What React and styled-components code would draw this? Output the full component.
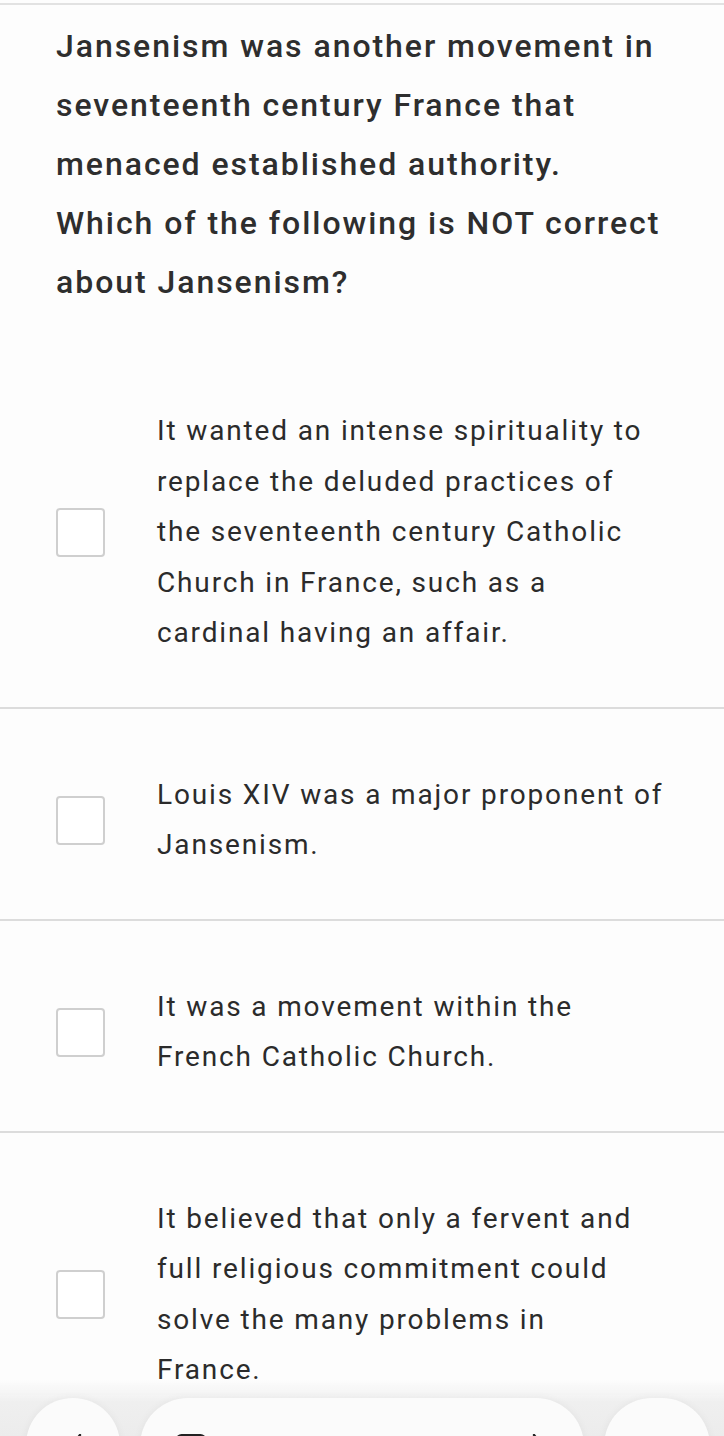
import React from "react";
import styled, { createGlobalStyle } from "styled-components";

const Global = createGlobalStyle`
  html, body { margin: 0; padding: 0; background: #fdfdfd; }
  body { font-family: Roboto, "Noto Sans", sans-serif; color: #2b2b2b; }
`;

const Page = styled.div`
  width: 724px;
  min-height: 1436px;
  border-top: 2px solid #e2e2e2;
  margin-top: 3px;
  background: #fdfdfd;
  position: relative;
`;

const Question = styled.h1`
  margin: 0;
  padding: 12px 0 0 56px;
  max-width: 606px;
  font-size: 32px;
  font-weight: 500;
  line-height: 59px;
  letter-spacing: 1.95px;
  color: #2e2e2e;
`;

const Options = styled.div`
  margin-top: 33px;
  display: flex;
  flex-direction: column;
`;

const Option = styled.label`
  display: flex;
  align-items: center;
  gap: 52px;
  padding: 61px 56px 48px 56px;
  border-bottom: ${(p) => (p.$last ? "none" : "2px solid #dcdcdc")};
  cursor: pointer;
`;

const Box = styled.span`
  flex: 0 0 auto;
  width: 45px;
  height: 45px;
  border: 2px solid #cfcfcf;
  border-radius: 4px;
  background: #fff;
`;

const OptionText = styled.span`
  display: flex;
  flex-direction: column;
  font-size: 28px;
  line-height: 50.5px;
  font-weight: 400;
  color: #2b2b2b;
  letter-spacing: 1.85px;
`;

const Line = styled.span`
  white-space: nowrap;
`;

const NavFade = styled.div`
  position: fixed;
  left: 0;
  right: 0;
  bottom: 0;
  height: 56px;
  background: linear-gradient(to bottom, rgba(240,240,240,0) 0%, #efefef 40%, #ececec 100%);
  pointer-events: none;
`;

const NavRow = styled.div`
  position: fixed;
  left: 0;
  right: 0;
  top: 1398px;
  display: flex;
  align-items: flex-start;
  gap: 20px;
  padding: 0 14px 0 26px;
`;

const Circle = styled.div`
  width: ${(p) => p.$w}px;
  height: 96px;
  border-radius: 48px;
  background: #fbfbfb;
  box-shadow: 0 0 8px rgba(0,0,0,0.05);
  position: relative;
  flex: 0 0 auto;
`;

const Pill = styled(Circle)`
  flex: 1 1 auto;
`;

const Icon = styled.svg`
  position: absolute;
  top: ${(p) => p.$top}px;
  left: ${(p) => p.$left}px;
`;

const options = [
  [
    "It wanted an intense spirituality to",
    "replace the deluded practices of",
    "the seventeenth century Catholic",
    "Church in France, such as a",
    "cardinal having an affair.",
  ],
  ["Louis XIV was a major proponent of", "Jansenism."],
  ["It was a movement within the", "French Catholic Church."],
  [
    "It believed that only a fervent and",
    "full religious commitment could",
    "solve the many problems in",
    "France.",
  ],
];

export default function App() {
  return (
    <>
      <Global />
      <Page>
        <Question>
          Jansenism was another movement in seventeenth century France that
          menaced established authority. Which of the following is NOT correct
          about Jansenism?
        </Question>
        <Options>
          {options.map((lines, i) => (
            <Option key={i} $last={i === options.length - 1}>
              <Box />
              <OptionText>
                {lines.map((l, j) => (
                  <Line key={j}>{l}</Line>
                ))}
              </OptionText>
            </Option>
          ))}
        </Options>
        <NavFade />
        <NavRow>
          <Circle $w={94}>
            <Icon $top={36} $left={44} width="12" height="12" viewBox="0 0 12 12">
              <path d="M10 1 L3 10" stroke="#222" strokeWidth="2.4" fill="none" strokeLinecap="round" />
            </Icon>
          </Circle>
          <Pill $w={450}>
            <Icon $top={36} $left={36} width="30" height="12" viewBox="0 0 30 12">
              <rect x="1.5" y="1.5" width="27" height="14" rx="4" stroke="#222" strokeWidth="3" fill="none" />
            </Icon>
            <Icon $top={38} $left={222} width="6" height="6" viewBox="0 0 6 6">
              <circle cx="3" cy="3" r="1" fill="#bbb" />
            </Icon>
            <Icon $top={36} $left={392} width="12" height="12" viewBox="0 0 12 12">
              <path d="M2 1 L9 10" stroke="#222" strokeWidth="2.4" fill="none" strokeLinecap="round" />
            </Icon>
          </Pill>
          <Circle $w={106} />
        </NavRow>
      </Page>
    </>
  );
}
